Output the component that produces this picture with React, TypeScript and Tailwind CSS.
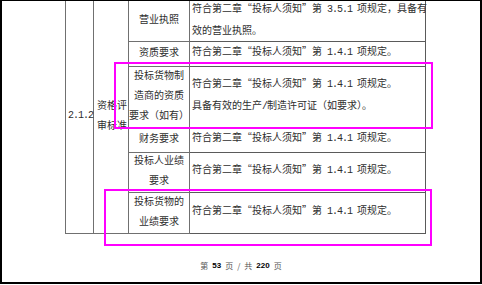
import React from 'react';

const cjk = { fontFamily: '"Noto Sans CJK SC", "Liberation Serif", serif' };
const mono = { fontFamily: '"Liberation Mono", monospace' };

// split a line so that ASCII runs take half an em and quotes a full em, as in the printed page
const Line: React.FC<{ text: string }> = ({ text }) => {
  const parts = text.match(/[\x20-\x7e]+|“|”|[^\x20-\x7e“”]+/g) || [];
  return (
    <div className="whitespace-nowrap">
      {parts.map((p, i) => {
        if (p === '“') return <span key={i} className="inline-block w-[10px] text-right">“</span>;
        if (p === '”') return <span key={i} className="inline-block w-[10px] text-left">”</span>;
        if (/^[\x20-\x7e]+$/.test(p))
          return <span key={i} className="tracking-[-1px] whitespace-pre" style={mono}>{p}</span>;
        return <span key={i}>{p}</span>;
      })}
    </div>
  );
};

const rows = [
  { h: 'h-[40px]', label: ['营业执照'], text: ['符合第二章“投标人须知”第 3.5.1 项规定，具备有', '效的营业执照。'] },
  { h: 'h-[25px]', label: ['资质要求'], text: ['符合第二章“投标人须知”第 1.4.1 项规定。'] },
  { h: 'h-[61px]', label: ['投标货物制', '造商的资质', '要求（如有）'], text: ['符合第二章“投标人须知”第 1.4.1 项规定。', '具备有效的生产/制造许可证（如要求）。'] },
  { h: 'h-[25px]', label: ['财务要求'], text: ['符合第二章“投标人须知”第 1.4.1 项规定。'] },
  { h: 'h-[40px]', label: ['投标人业绩', '要求'], text: ['符合第二章“投标人须知”第 1.4.1 项规定。'] },
  { h: 'h-[41px]', label: ['投标货物的', '业绩要求'], text: ['符合第二章“投标人须知”第 1.4.1 项规定。'] },
];

const App: React.FC = () => {
  return (
    <div className="relative w-[482px] h-[284px] bg-white border-l-2 border-t border-r-2 border-b-2 border-black overflow-hidden text-[#2e2e2e]" style={cjk}>
      <table className="ml-[63px] w-[361px] table-fixed border-collapse text-[10px] leading-[20px]">
        <colgroup>
          <col className="w-[28px]" />
          <col className="w-[35px]" />
          <col className="w-[61px]" />
          <col />
        </colgroup>
        <tbody>
          {rows.map((r, i) => (
            <tr key={i} className={r.h}>
              {i === 0 && (
                <>
                  <td rowSpan={6} className="border border-t-0 border-[#707070] align-middle p-0 pl-[2px]">
                    <div className="-my-[2px] -translate-y-[2px]">
                      <Line text="2.1.2" />
                    </div>
                  </td>
                  <td rowSpan={6} className="border border-t-0 border-[#707070] align-middle p-0 pl-[3px]">
                    <div className="-my-[2px] -translate-y-[2px]">
                      <div className="whitespace-nowrap">资格评</div>
                      <div className="whitespace-nowrap">审标准</div>
                    </div>
                  </td>
                </>
              )}
              <td className={`border ${i === 0 ? 'border-t-0' : ''} border-[#707070] text-center align-middle p-0`}>
                <div className="-my-[2px] -translate-y-[2px]">
                  {r.label.map((l, j) => (
                    <div key={j} className="whitespace-nowrap">{l}</div>
                  ))}
                </div>
              </td>
              <td className={`border ${i === 0 ? 'border-t-0' : ''} border-[#5a5a5a] align-middle p-0 pl-[2px]`}>
                <div className="-my-[2px] -translate-y-[2px]">
                  {r.text.map((t, j) => (
                    <Line key={j} text={t} />
                  ))}
                </div>
              </td>
            </tr>
          ))}
        </tbody>
      </table>

      <div className="mt-[26px] flex justify-center items-center gap-[4px] text-[8px] leading-[12px] text-[#555]">
        <span>第</span>
        <span className="font-bold text-black" style={{ fontFamily: '"Liberation Sans", sans-serif' }}>53</span>
        <span>页</span>
        <span>/</span>
        <span>共</span>
        <span className="font-bold text-black" style={{ fontFamily: '"Liberation Sans", sans-serif' }}>220</span>
        <span>页</span>
      </div>

      <div className="absolute left-[112px] top-[61px] w-[319px] h-[67px] border-2 border-[#ff00ff]" />
      <div className="absolute left-[102px] top-[188px] w-[328px] h-[57px] border-2 border-[#ff00ff]" />
    </div>
  );
};

export default App;
